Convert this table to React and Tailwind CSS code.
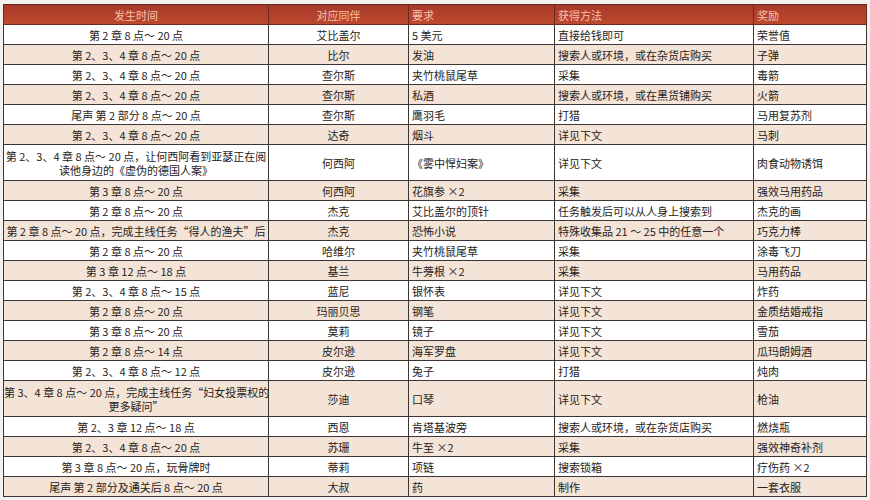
const rows = [
  ["第 2 章 8 点～ 20 点", "艾比盖尔", "5 美元", "直接给钱即可", "荣誉值"],
  ["第 2、3、4 章 8 点～ 20 点", "比尔", "发油", "搜索人或环境，或在杂货店购买", "子弹"],
  ["第 2、3、4 章 8 点～ 20 点", "查尔斯", "夹竹桃鼠尾草", "采集", "毒箭"],
  ["第 2、3、4 章 8 点～ 20 点", "查尔斯", "私酒", "搜索人或环境，或在黑货铺购买", "火箭"],
  ["尾声 第 2 部分 8 点～ 20 点", "查尔斯", "鹰羽毛", "打猎", "马用复苏剂"],
  ["第 2、3、4 章 8 点～ 20 点", "达奇", "烟斗", "详见下文", "马刺"],
  ["第 2、3、4 章 8 点～ 20 点，让何西阿看到亚瑟正在阅\n读他身边的《虚伪的德国人案》", "何西阿", "《雾中悍妇案》", "详见下文", "肉食动物诱饵", true],
  ["第 3 章 8 点～ 20 点", "何西阿", "花旗参 ×2", "采集", "强效马用药品"],
  ["第 2 章 8 点～ 20 点", "杰克", "艾比盖尔的顶针", "任务触发后可以从人身上搜索到", "杰克的画"],
  ["第 2 章 8 点～ 20 点，完成主线任务“得人的渔夫”后", "杰克", "恐怖小说", "特殊收集品 21 ～ 25 中的任意一个", "巧克力棒"],
  ["第 2 章 8 点～ 20 点", "哈维尔", "夹竹桃鼠尾草", "采集", "涂毒飞刀"],
  ["第 3 章 12 点～ 18 点", "基兰", "牛蒡根 ×2", "采集", "马用药品"],
  ["第 2、3、4 章 8 点～ 15 点", "蓝尼", "银怀表", "详见下文", "炸药"],
  ["第 2 章 8 点～ 20 点", "玛丽贝思", "钢笔", "详见下文", "金质结婚戒指"],
  ["第 3 章 8 点～ 20 点", "莫莉", "镜子", "详见下文", "雪茄"],
  ["第 2 章 8 点～ 14 点", "皮尔逊", "海军罗盘", "详见下文", "瓜玛朗姆酒"],
  ["第 2、3、4 章 8 点～ 12 点", "皮尔逊", "兔子", "打猎", "炖肉"],
  ["第 3、4 章 8 点～ 20 点，完成主线任务“妇女投票权的\n更多疑问”", "莎迪", "口琴", "详见下文", "枪油", true],
  ["第 2、3 章 12 点～ 18 点", "西恩", "肯塔基波旁", "搜索人或环境，或在杂货店购买", "燃烧瓶"],
  ["第 2、3、4 章 8 点～ 20 点", "苏珊", "牛至 ×2", "采集", "强效神奇补剂"],
  ["第 3 章 8 点～ 20 点，玩骨牌时", "蒂莉", "项链", "搜索锁箱", "疗伤药 ×2"],
  ["尾声 第 2 部分及通关后 8 点～ 20 点", "大叔", "药", "制作", "一套衣服"],
];

const App = () => {
  return (
    <div
      className="w-[870px] h-[500px] bg-[#f3f1ef] pt-[4px] pl-[3px] overflow-hidden"
      style={{ fontFamily: '"Noto Sans CJK SC", "Noto Sans", sans-serif' }}
    >
      <table className="table-fixed border-collapse w-[863px] text-[11px] leading-[14px] text-[#262220]">
        <colgroup>
          <col className="w-[265px]" />
          <col className="w-[140px]" />
          <col className="w-[146px]" />
          <col className="w-[199px]" />
          <col className="w-[113px]" />
        </colgroup>
        <thead>
          <tr className="h-[20px] bg-gradient-to-b from-[#a9392a] to-[#bd4a2f] text-[#f7c2ae]">
            <th className="font-normal text-center border border-[#6b2a20]">发生时间</th>
            <th className="font-normal text-center border border-[#6b2a20]">对应同伴</th>
            <th className="font-normal text-left pl-[3px] border border-[#6b2a20]">要求</th>
            <th className="font-normal text-left pl-[3px] border border-[#6b2a20]">获得方法</th>
            <th className="font-normal text-left pl-[3px] border border-[#6b2a20]">奖励</th>
          </tr>
        </thead>
        <tbody>
          {rows.map((r, i) => (
            <tr
              key={i}
              className={`${r[5] ? "h-[36px]" : "h-[20px]"} ${i % 2 === 0 ? "bg-white" : "bg-[#f3e4d7]"}`}
            >
              <td className="border border-[#3b3633] text-center whitespace-pre p-0">{r[0]}</td>
              <td className="border border-[#3b3633] text-center p-0">{r[1]}</td>
              <td className="border border-[#3b3633] pl-[3px] py-0">{r[2]}</td>
              <td className="border border-[#3b3633] pl-[3px] py-0">{r[3]}</td>
              <td className="border border-[#3b3633] pl-[3px] py-0">{r[4]}</td>
            </tr>
          ))}
        </tbody>
      </table>
    </div>
  );
};

export default App;
